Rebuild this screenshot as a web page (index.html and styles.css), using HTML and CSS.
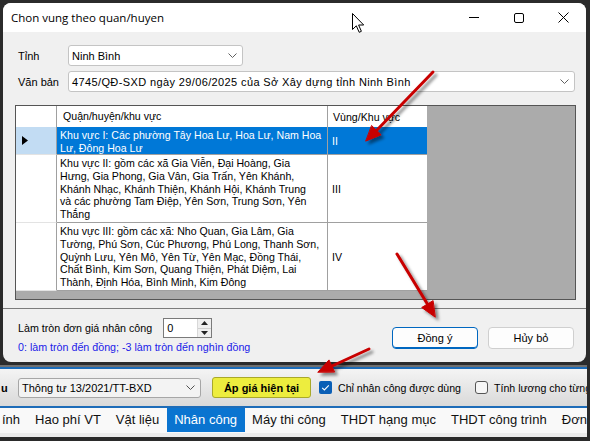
FILE: index.html
```html
<!DOCTYPE html>
<html lang="vi">
<head>
<meta charset="utf-8">
<title>Chon vung theo quan/huyen</title>
<link rel="stylesheet" href="styles.css">
</head>
<body>
<div class="screen">
  <div class="dialog">
    <div class="titlebar">
      <span class="title">Chon vung theo quan/huyen</span>
      <div class="winctl">
        <span class="wbtn"><svg width="10" height="1" viewBox="0 0 10 1"><rect width="10" height="1" fill="#000"/></svg></span>
        <span class="wbtn"><svg width="10" height="10" viewBox="0 0 10 10"><rect x="0.5" y="0.5" width="9" height="9" rx="1.5" fill="none" stroke="#000"/></svg></span>
        <span class="wbtn"><svg width="11" height="11" viewBox="0 0 11 11"><path d="M0.5 0.5 L10.5 10.5 M10.5 0.5 L0.5 10.5" stroke="#000" stroke-width="1"/></svg></span>
      </div>
    </div>
    <div class="dlg-top">
      <div class="frow">
        <span class="flabel">Tỉnh</span>
        <div class="combo combo-tinh"><span>Ninh Bình</span><svg class="chev" width="9" height="5" viewBox="0 0 9 5"><polyline points="0.5,0.5 4.5,4.5 8.5,0.5" fill="none" stroke="#606060"/></svg></div>
      </div>
      <div class="frow">
        <span class="flabel">Văn bản</span>
        <div class="combo combo-vb"><span class="vb-text">4745/QĐ-SXD ngày 29/06/2025 của Sở Xây dựng tỉnh Ninh Bình</span><svg class="chev" width="9" height="5" viewBox="0 0 9 5"><polyline points="0.5,0.5 4.5,4.5 8.5,0.5" fill="none" stroke="#606060"/></svg></div>
      </div>
      <div class="grid">
        <div class="grow ghead">
          <div class="rh"></div>
          <div class="c1">Quận/huyện/khu vực</div>
          <div class="c2">Vùng/Khu vực</div>
        </div>
        <div class="grow r1 sel">
          <div class="rh"><svg width="6" height="9" viewBox="0 0 6 9"><polygon points="0,0 6,4.5 0,9" fill="#000"/></svg></div>
          <div class="c1">Khu vực I: Các phường Tây Hoa Lư, Hoa Lư, Nam Hoa<br>Lư, Đông Hoa Lư</div>
          <div class="c2">II</div>
        </div>
        <div class="grow r5">
          <div class="rh"></div>
          <div class="c1">Khu vực II: gồm các xã Gia Viễn, Đại Hoàng, Gia<br>Hưng, Gia Phong, Gia Vân, Gia Trấn, Yên Khánh,<br>Khánh Nhạc, Khánh Thiện, Khánh Hội, Khánh Trung<br>và các phường Tam Điệp, Yên Sơn, Trung Sơn, Yên<br>Thắng</div>
          <div class="c2">III</div>
        </div>
        <div class="grow r5">
          <div class="rh"></div>
          <div class="c1">Khu vực III: gồm các xã: Nho Quan, Gia Lâm, Gia<br>Tường, Phú Sơn, Cúc Phương, Phú Long, Thanh Sơn,<br>Quỳnh Lưu, Yên Mô, Yên Từ, Yên Mạc, Đồng Thái,<br>Chất Bình, Kim Sơn, Quang Thiện, Phát Diệm, Lai<br>Thành, Định Hóa, Bình Minh, Kim Đông</div>
          <div class="c2">IV</div>
        </div>
      </div>
    </div>
    <div class="dlg-bottom">
      <div class="round">
        <div class="round-row">
          <span class="round-label">Làm tròn đơn giá nhân công</span>
          <div class="spin">
            <span class="spin-val">0</span>
            <div class="spin-btns">
              <span class="spin-b"><svg width="7" height="4" viewBox="0 0 7 4"><polygon points="0,4 3.5,0 7,4" fill="#222"/></svg></span>
              <span class="spin-b"><svg width="7" height="4" viewBox="0 0 7 4"><polygon points="0,0 3.5,4 7,0" fill="#222"/></svg></span>
            </div>
          </div>
        </div>
        <div class="hint">0: làm tròn đến đồng; -3 làm tròn đến nghìn đồng</div>
      </div>
      <div class="actions">
        <button class="btn btn-primary">Đồng ý</button>
        <button class="btn">Hủy bỏ</button>
      </div>
    </div>
  </div>

  <div class="app">
    <div class="app-shade"></div>
    <div class="toolbar">
      <span class="tb-lead">u</span>
      <div class="tb-combo"><span>Thông tư 13/2021/TT-BXD</span><svg class="chev" width="9" height="5" viewBox="0 0 9 5"><polyline points="0.5,0.5 4.5,4.5 8.5,0.5" fill="none" stroke="#505050"/></svg></div>
      <button class="tb-yellow">Áp giá hiện tại</button>
      <span class="cb cb-on"><svg width="13" height="13" viewBox="0 0 13 13"><path d="M3.2 6.8 L5.4 9 L9.8 4.3" fill="none" stroke="#fff" stroke-width="1.1"/></svg></span>
      <span class="cb-text">Chỉ nhân công được dùng</span>
      <span class="cb cb-off"></span>
      <span class="cb-text">Tính lương cho từng</span>
    </div>
    <div class="tabs">
      <span class="tab tab-first">ính</span>
      <span class="tab">Hao phí VT</span>
      <span class="tab">Vật liệu</span>
      <span class="tab tab-active">Nhân công</span>
      <span class="tab">Máy thi công</span>
      <span class="tab">THDT hạng mục</span>
      <span class="tab">THDT công trình</span>
      <span class="tab">Đơn</span>
    </div>
    <div class="app-content"></div>
  </div>

  <svg class="annot" width="590" height="441" viewBox="0 0 590 441">
    <defs>
      <filter id="sh" x="-30%" y="-30%" width="160%" height="160%">
        <feDropShadow dx="3" dy="3" stdDeviation="1.6" flood-color="#000" flood-opacity="0.45"/>
      </filter>
    </defs>
    <g filter="url(#sh)" fill="#c80000" stroke="#c80000" stroke-width="3" stroke-linecap="round">
      <line x1="433" y1="72" x2="377" y2="130"/>
      <polygon stroke-width="1" points="366,141 381.1,134.8 371.8,125.7"/>
      <line x1="397" y1="254" x2="428" y2="305"/>
      <polygon stroke-width="1" points="435,317 421.7,307.5 432.8,300.8"/>
      <line x1="369" y1="349" x2="332" y2="366"/>
      <polygon stroke-width="1" points="318,372 329,359.9 334.4,371.7"/>
    </g>
  </svg>
  <svg class="cursor" width="13" height="21" viewBox="0 0 13 21">
    <polygon points="0.5,0.5 0.5,16.5 4.3,12.8 7.2,19.3 9.4,18.3 6.6,12 11.7,12" fill="#fff" stroke="#000" stroke-width="1" stroke-linejoin="round"/>
  </svg>
</div>
</body>
</html>
```

FILE: styles.css
```css
* { box-sizing: border-box; }
body { margin: 0; background: #2b2b2b; }

.screen {
  width: 590px;
  height: 441px;
  position: relative;
  overflow: hidden;
  background: #2b2b2b;
  font-family: "Liberation Sans", Arial, sans-serif;
  font-size: 11px;
  color: #000;
  display: flex;
  flex-direction: column;
}

/* ---------- dialog ---------- */
.dialog {
  flex: none;
  margin: 3px 4px 0 3px;
  height: 359px;
  background: #f0f0f0;
  border-radius: 8px;
  overflow: hidden;
  display: flex;
  flex-direction: column;
}
.titlebar {
  flex: none;
  height: 29px;
  background: #fff;
  display: flex;
  align-items: center;
}
.title {
  flex: 1;
  margin-left: 8px;
  font-family: "Open Sans", "Noto Sans", sans-serif;
  font-size: 11.5px;
  color: #000;
}
.winctl { display: flex; height: 29px; }
.wbtn { width: 45px; display: flex; align-items: center; justify-content: center; }

.dlg-top { flex: none; padding: 13px 10px 0 12px; }
.frow { display: flex; align-items: center; height: 21px; margin-bottom: 5px; }
.flabel { width: 53px; padding-left: 3px; flex: none; }
.combo {
  height: 21px;
  background: #fff;
  border: 1px solid #c4c4c4;
  border-radius: 3px;
  display: flex;
  align-items: center;
  padding-left: 3px;
  white-space: nowrap;
}
.combo-tinh { width: 175px; }
.combo-vb { flex: 1; margin-right: 1px; }
.vb-text { letter-spacing: 0.38px; }
.chev { margin-left: auto; margin-right: 5px; flex: none; }

/* grid */
.grid {
  margin-top: 13px;
  height: 195px;
  border: 1px solid #555;
  background: #ababab;
  font-size: 10.6px;
}
.grow { display: flex; width: 411px; background: #fff; }
.grow > div { white-space: nowrap; }
.rh { width: 41px; flex: none; border-right: 1px solid #a0a0a0; border-bottom: 1px solid #e3e3e3; display: flex; align-items: center; padding-left: 6px; }
.c1 { width: 271px; flex: none; border-right: 1px solid #a0a0a0; border-bottom: 1px solid #a0a0a0; padding: 2px 0 0 3px; line-height: 12.8px; }
.c2 { width: 99px; flex: none; border-bottom: 1px solid #a0a0a0; display: flex; align-items: center; padding-left: 4px; }
.ghead { height: 21px; }
.ghead .c1, .ghead .c2 { border-bottom: none; display: flex; align-items: center; padding-top: 0; }
.ghead .rh { border-bottom: none; }
.ghead .c1 { padding-left: 6px; }
.ghead .c2 { padding-left: 5px; }
.r1 { height: 28px; }
.r5 { height: 68px; }
.sel .rh { background: #c2dcf3; }
.sel .c1, .sel .c2 { background: #0078d7; color: #fff; }

/* bottom of dialog */
.dlg-bottom {
  flex: 1;
  margin-top: 8px;
  border-top: 1px solid #7c7c7c;
  display: flex;
  padding: 0 12px 0 15px;
}
.round { padding-top: 9px; }
.round-row { display: flex; align-items: center; height: 20px; gap: 11px; }
.round-label { font-size: 10.7px; }
.spin {
  width: 49px;
  height: 20px;
  background: #fff;
  border: 1px solid #7a7a7a;
  display: flex;
  align-items: center;
}
.spin-val { flex: 1; padding-left: 3px; }
.spin-btns { width: 14px; height: 18px; display: flex; flex-direction: column; border-left: 1px solid #d8d8d8; }
.spin-b { flex: 1; display: flex; align-items: center; justify-content: center; background: #efefef; border-bottom: 1px solid #d0d0d0; }
.spin-b:last-child { border-bottom: none; }
.hint { margin-top: 3px; line-height: 13px; font-size: 10.7px; color: #1a1ae8; white-space: nowrap; }

.actions { margin-left: auto; padding-top: 18px; display: flex; gap: 10px; align-items: flex-start; }
.btn {
  width: 86px;
  height: 22px;
  background: #fdfdfd;
  border: 1px solid #cfcfcf;
  border-radius: 4px;
  font-family: "Liberation Sans", Arial, sans-serif;
  font-size: 11px;
  color: #000;
  padding: 0;
}
.btn-primary { border-color: #0067c0; box-shadow: inset 0 -1px 0 #0067c0; }

/* ---------- app behind ---------- */
.app {
  flex: none;
  margin-top: 3px;
  width: 587px;
  display: flex;
  flex-direction: column;
}
.app-shade { height: 2px; background: #6f6f6f; }
.toolbar {
  height: 39px;
  border-top: 2px solid #1d6cb8;
  background: linear-gradient(#f4f4f4, #d9d9d9);
  display: flex;
  align-items: center;
  white-space: nowrap;
  overflow: hidden;
}
.tb-lead { width: 18px; flex: none; padding-left: 1px; font-weight: bold; }
.tb-combo {
  width: 183px;
  height: 20px;
  flex: none;
  border: 1px solid #a6a6a6;
  border-radius: 3px;
  background: #f3f3f3;
  display: flex;
  align-items: center;
  padding-left: 3px;
}
.tb-yellow {
  margin-left: 11px;
  width: 99px;
  height: 21px;
  flex: none;
  background: #eded3e;
  border: 1px solid #a9a92a;
  border-radius: 3px;
  font-family: "Liberation Sans", Arial, sans-serif;
  font-size: 11px;
  font-weight: bold;
  color: #000;
  padding: 0;
}
.cb { width: 13px; height: 13px; flex: none; border-radius: 2px; display: flex; }
.cb-on { margin-left: 8px; background: #0a5fb6; }
.cb-off { margin-left: 14px; border: 1px solid #555; border-radius: 3px; background: #f6f6f6; }
.cb-text { margin-left: 6px; font-size: 10.6px; }

.tabs {
  height: 27px;
  border-top: 2px solid #1d6cb8;
  background: #f9f9f9;
  display: flex;
  align-items: flex-start;
  font-size: 13px;
  white-space: nowrap;
  color: #111;
  overflow: hidden;
}
.tab { padding: 0 7.5px; height: 24px; line-height: 24px; flex: none; }
.tab-first { margin-left: -5.5px; }
.tab-active { background: #0a74d0; color: #fff; }
.app-content { height: 4px; background: #ececec; }

/* ---------- overlays ---------- */
.annot { position: absolute; left: 0; top: 0; pointer-events: none; }
.cursor { position: absolute; left: 352px; top: 13px; pointer-events: none; }
```
